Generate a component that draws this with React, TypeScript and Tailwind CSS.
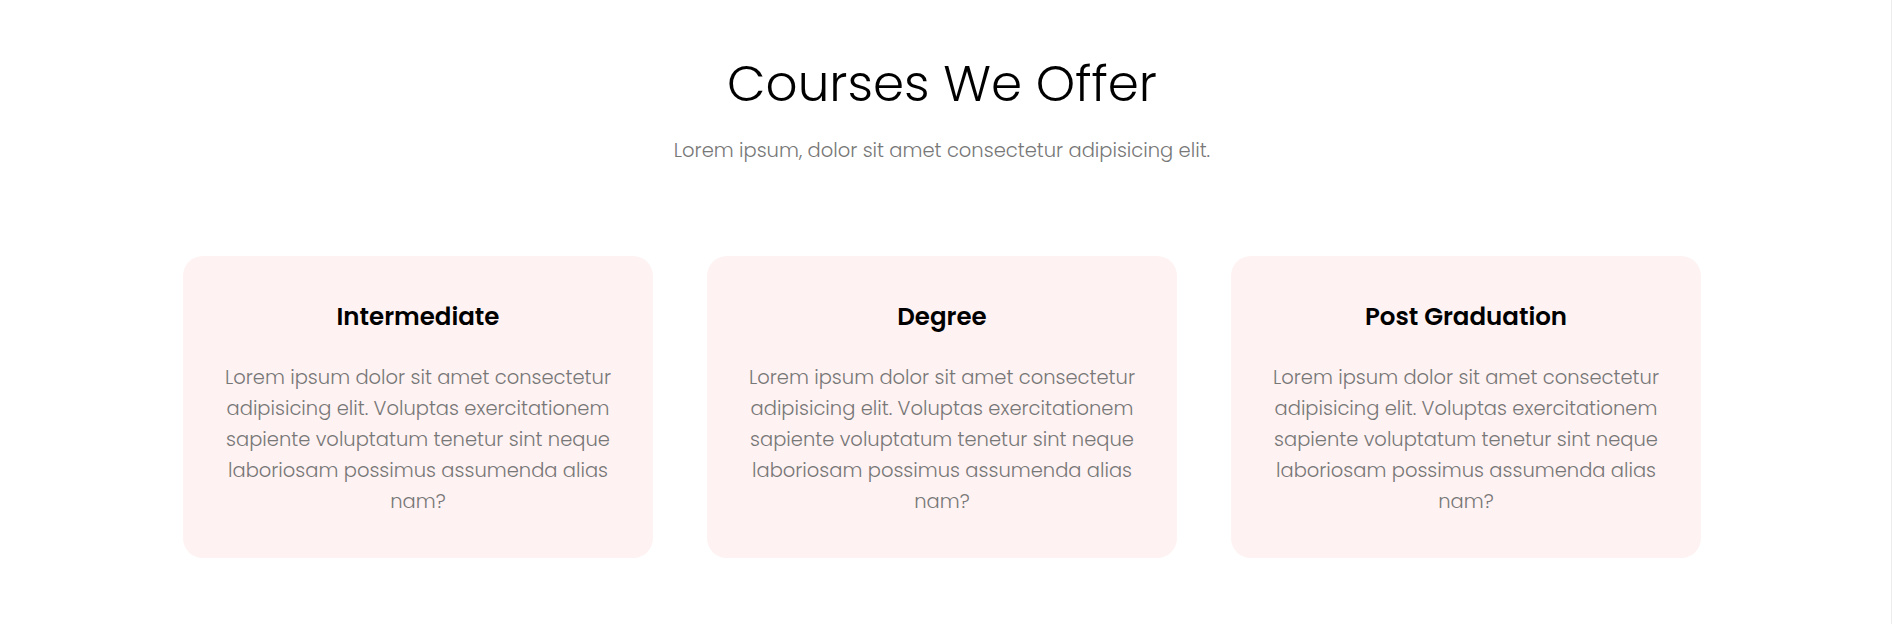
import React from "react";

const courses = [
  { id: 1, title: "Intermediate" },
  { id: 2, title: "Degree" },
  { id: 3, title: "Post Graduation" },
];

const body =
  "Lorem ipsum dolor sit amet consectetur adipisicing elit. Voluptas exercitationem sapiente voluptatum tenetur sint neque laboriosam possimus assumenda alias nam?";

const App: React.FC = () => {
  return (
    <div className="flex h-[624px] w-full bg-white font-['Poppins','Inter',sans-serif]">
      <section className="flex flex-1 flex-col items-center pt-[54px]">
        <h1 className="text-[50px] font-light leading-[60px] text-black">
          Courses We Offer
        </h1>
        <p className="mt-[23px] text-[19.5px] font-light leading-[28px] text-[#777]">
          Lorem ipsum, dolor sit amet consectetur adipisicing elit.
        </p>

        <div className="mt-[91px] grid grid-cols-3 gap-[54px]">
          {courses.map((course) => (
            <div
              key={course.id}
              className="w-[470px] h-[302px] rounded-[20px] bg-[#fef2f2] px-10 pt-[43px] text-center"
            >
              <h3 className="text-[24.5px] font-semibold leading-[36px] text-black">
                {course.title}
              </h3>
              <p className="mt-[27px] text-[19.5px] font-light leading-[31px] text-[#777]">
                {body}
              </p>
            </div>
          ))}
        </div>
      </section>
      {/* scrollbar strip */}
      <div className="w-[8px] border-r border-[#ececec]" />
    </div>
  );
};

export default App;
